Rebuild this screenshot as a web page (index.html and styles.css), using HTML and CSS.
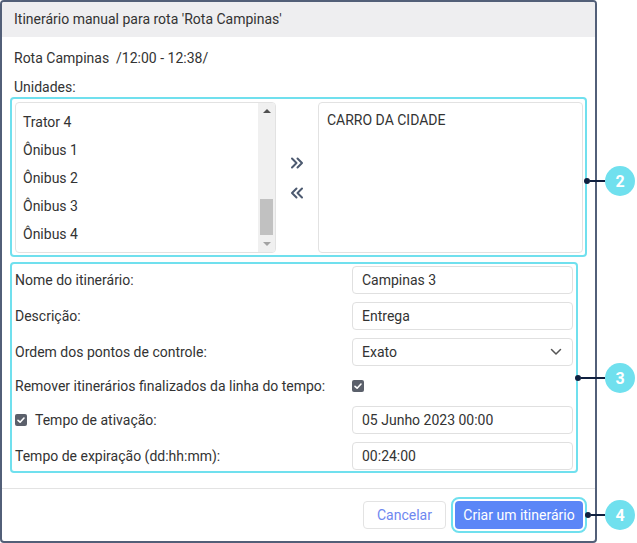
FILE: index.html
```html
<!DOCTYPE html>
<html lang="pt">
<head>
<meta charset="utf-8">
<title>Itinerário manual</title>
<link rel="stylesheet" href="styles.css">
</head>
<body>
<div class="page">
  <div class="dialog">
    <div class="dialog-header">Itinerário manual para rota 'Rota Campinas'</div>
    <div class="dialog-body">
      <div class="line route">Rota Campinas &nbsp;/12:00 - 12:38/</div>
      <div class="line units-label">Unidades:</div>
      <div class="hl units-box">
        <div class="list">
          <div class="list-items">
            <div class="item">Trator 4</div>
            <div class="item">Ônibus 1</div>
            <div class="item">Ônibus 2</div>
            <div class="item">Ônibus 3</div>
            <div class="item">Ônibus 4</div>
          </div>
          <div class="scrollbar">
            <div class="sb-arrow up"></div>
            <div class="sb-track"><div class="sb-thumb"></div></div>
            <div class="sb-arrow down"></div>
          </div>
        </div>
        <div class="arrows">
          <svg class="arr" width="14" height="12" viewBox="0 0 14 12"><path d="M2 1.5 L6.5 6 L2 10.5 M7.5 1.5 L12 6 L7.5 10.5" fill="none" stroke="#4d5a70" stroke-width="2" stroke-linecap="round" stroke-linejoin="round"/></svg>
          <svg class="arr" width="14" height="12" viewBox="0 0 14 12"><path d="M6.5 1.5 L2 6 L6.5 10.5 M12 1.5 L7.5 6 L12 10.5" fill="none" stroke="#4d5a70" stroke-width="2" stroke-linecap="round" stroke-linejoin="round"/></svg>
        </div>
        <div class="selected">
          <div class="sel-item">CARRO DA CIDADE</div>
        </div>
      </div>
      <div class="hl form-box">
        <div class="row">
          <div class="label">Nome do itinerário:</div>
          <div class="input">Campinas 3</div>
        </div>
        <div class="row">
          <div class="label">Descrição:</div>
          <div class="input">Entrega</div>
        </div>
        <div class="row">
          <div class="label">Ordem dos pontos de controle:</div>
          <div class="input select">Exato
            <svg class="chev" width="12" height="8" viewBox="0 0 12 8"><path d="M1.5 1.5 L6 6 L10.5 1.5" fill="none" stroke="#555" stroke-width="1.5" stroke-linecap="round" stroke-linejoin="round"/></svg>
          </div>
        </div>
        <div class="row row-short">
          <div class="label">Remover itinerários finalizados da linha do tempo:</div>
          <div class="field-check"><span class="check"><svg width="12" height="12" viewBox="0 0 12 12"><path d="M3 6.3 L5.1 8.2 L9 4" fill="none" stroke="#fff" stroke-width="1.6" stroke-linecap="round" stroke-linejoin="round"/></svg></span></div>
        </div>
        <div class="row">
          <div class="label"><span class="check"><svg width="12" height="12" viewBox="0 0 12 12"><path d="M3 6.3 L5.1 8.2 L9 4" fill="none" stroke="#fff" stroke-width="1.6" stroke-linecap="round" stroke-linejoin="round"/></svg></span><span class="check-label">Tempo de ativação:</span></div>
          <div class="input">05 Junho 2023 00:00</div>
        </div>
        <div class="row">
          <div class="label">Tempo de expiração (dd:hh:mm):</div>
          <div class="input">00:24:00</div>
        </div>
      </div>
    </div>
    <div class="dialog-footer">
      <button class="btn btn-cancel">Cancelar</button>
      <button class="btn btn-primary">Criar um itinerário</button>
    </div>
  </div>

  <div class="callout c2"><span class="dot"></span><span class="stem"></span><span class="badge">2</span></div>
  <div class="callout c3"><span class="dot"></span><span class="stem"></span><span class="badge">3</span></div>
  <div class="callout c4"><span class="dot"></span><span class="stem"></span><span class="badge">4</span></div>
</div>
</body>
</html>
```
FILE: styles.css
```css
* { box-sizing: border-box; }
html, body { margin: 0; padding: 0; background: #fff; }
body {
  font-family: Roboto, "Liberation Sans", Arial, sans-serif;
  font-size: 14px;
  color: #333;
}
.page { position: relative; width: 637px; height: 543px; }

.dialog {
  width: 597px;
  height: 543px;
  border: 2px solid #525f78;
  border-radius: 4px;
  background: #fff;
  display: flex;
  flex-direction: column;
  overflow: hidden;
}
.dialog-header {
  height: 35px;
  background: #eeeef0;
  padding-left: 12px;
  line-height: 35px;
  color: #333;
}
.dialog-body {
  padding: 11px 8px 0 8px;
}
.line { height: 20px; line-height: 20px; padding-left: 4px; }
.units-label { margin-top: 9px; }

.hl {
  border: 2px solid #70e0ee;
  border-radius: 4px;
}
.units-box {
  height: 160px;
  padding: 3px 2px 2px 3px;
  display: flex;
}
.list {
  width: 261px;
  height: 151px;
  border: 1px solid #e2e2e2;
  border-radius: 4px;
  display: flex;
  overflow: hidden;
}
.list-items { flex: 1; padding-top: 5px; padding-left: 7px; }
.item { height: 28px; line-height: 28px; }
.scrollbar {
  width: 17px;
  background: #f0f0f0;
  display: flex;
  flex-direction: column;
  align-items: center;
}
.sb-arrow { width: 17px; height: 17px; position: relative; }
.sb-arrow.up::after, .sb-arrow.down::after {
  content: "";
  position: absolute;
  left: 5px;
  border-left: 4px solid transparent;
  border-right: 4px solid transparent;
}
.sb-arrow.up::after { top: 6px; border-bottom: 4px solid #505050; }
.sb-arrow.down::after { top: 7px; border-top: 4px solid #a3a3a3; }
.sb-track { flex: 1; width: 100%; display: flex; flex-direction: column; justify-content: flex-end; padding: 0 2px; }
.sb-thumb { height: 36px; background: #c1c1c1; }

.arrows {
  width: 42px;
  display: flex;
  flex-direction: column;
  align-items: center;
  justify-content: center;
  gap: 18px;
  padding-top: 1px;
}
.arr { display: block; margin-left: -1px; }
.selected {
  width: 265px;
  height: 151px;
  border: 1px solid #e2e2e2;
  border-radius: 4px;
  padding: 8px 8px;
}
.sel-item { line-height: 18px; }

.form-box {
  margin-top: 5px;
  width: 568px;
  height: 211px;
  padding: 2px 3px 0 3px;
  display: flex;
  flex-direction: column;
  gap: 8px;
}
.row {
  display: flex;
  align-items: center;
  justify-content: space-between;
  height: 28px;
}
.row-short { height: 24px; }
.label { display: flex; align-items: center; }
.input {
  width: 221px;
  height: 28px;
  border: 1px solid #e0e0e0;
  border-radius: 4px;
  padding-left: 9px;
  line-height: 26px;
}
.select { display: flex; justify-content: space-between; align-items: center; padding-right: 10px; }
.chev { display: block; }
.field-check { width: 221px; display: flex; align-items: center; }
.check {
  width: 12px;
  height: 12px;
  background: #5b606b;
  border-radius: 2px;
  display: inline-flex;
}
.check svg { display: block; }
.check-label { margin-left: 8px; }

.dialog-footer {
  margin-top: 15px;
  border-top: 1px solid #e3e3e3;
  padding: 12px 12px 0 0;
  display: flex;
  justify-content: flex-end;
  gap: 9px;
}
.btn {
  font-family: inherit;
  font-size: 14px;
  height: 28px;
  border-radius: 4px;
  cursor: pointer;
}
.btn-cancel {
  width: 83px;
  background: #fff;
  border: 1px solid #e3e3e3;
  color: #6e87f0;
}
.btn-primary {
  width: 128px;
  background: #5b86f7;
  border: none;
  color: #fff;
  outline: 2px solid #70e0ee;
  outline-offset: 2px;
}

.callout {
  position: absolute;
  display: flex;
  align-items: center;
  height: 30px;
}
.dot { width: 6px; height: 6px; border-radius: 50%; background: #0f2040; }
.stem { height: 2px; background: #0f2040; flex: 1; }
.badge {
  width: 30px;
  height: 30px;
  border-radius: 50%;
  background: #70e0ee;
  color: #fff;
  font-weight: 700;
  font-size: 16px;
  display: flex;
  align-items: center;
  justify-content: center;
}
.c2 { left: 584px; top: 166px; width: 51px; }
.c3 { left: 575px; top: 363px; width: 60px; }
.c4 { left: 585px; top: 500px; width: 50px; }
```
